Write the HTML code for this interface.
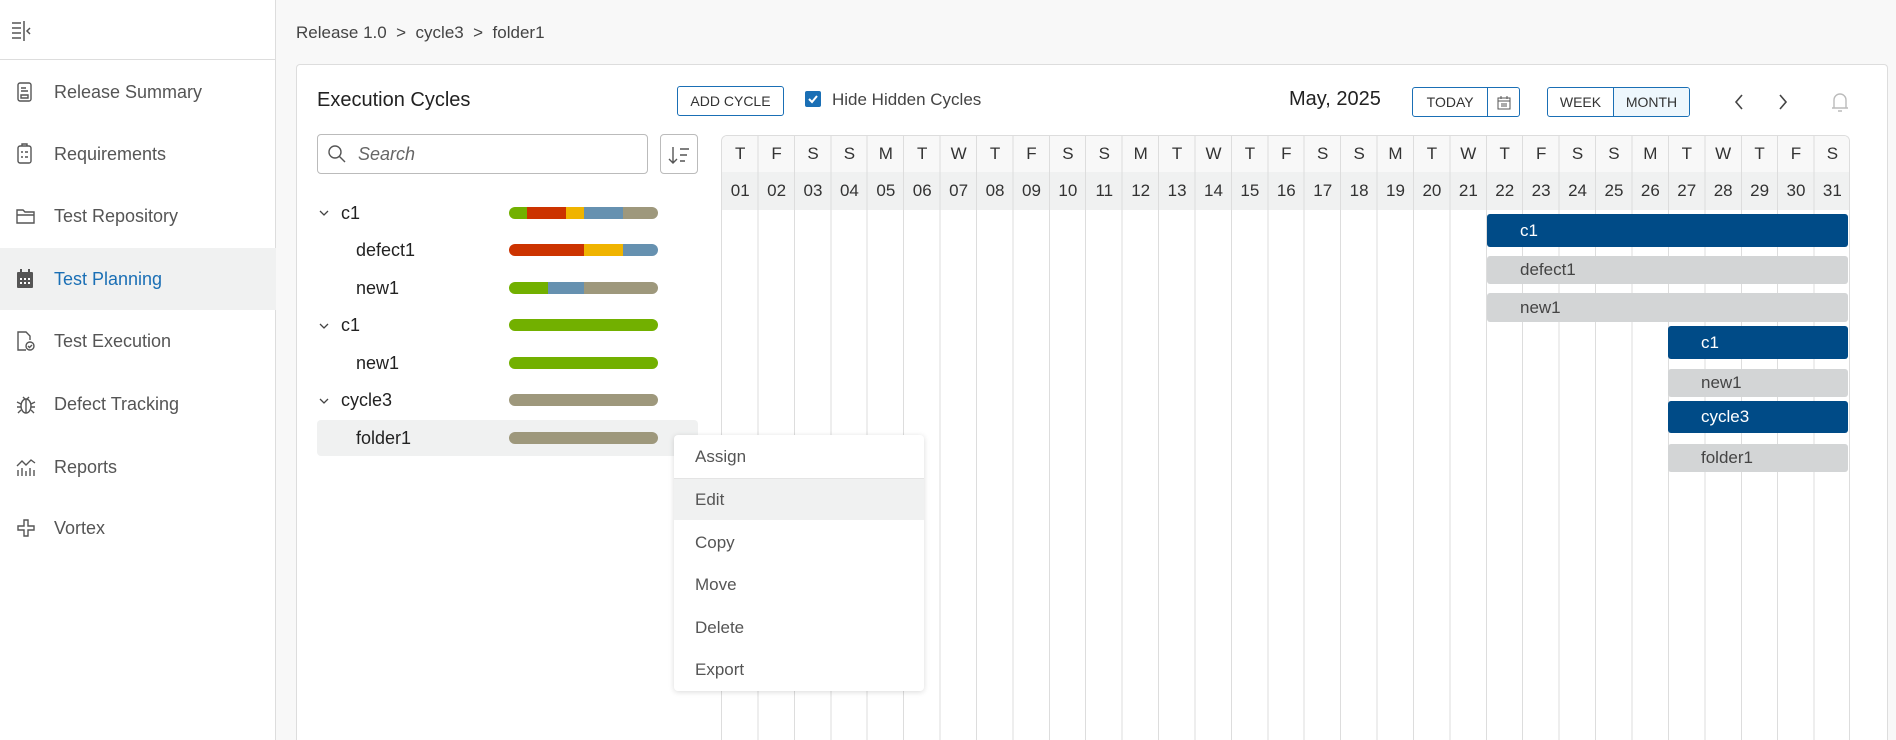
<!DOCTYPE html>
<html><head><meta charset="utf-8"><style>
*{box-sizing:border-box;margin:0;padding:0}
html{width:1896px;height:740px;overflow:hidden}
body{width:1896px;height:740px;overflow:hidden;background:#f8f8f8;font-family:"Liberation Sans",sans-serif;color:#333;position:relative}
.abs{position:absolute}
#side{left:0;top:0;width:276px;height:740px;background:#fff;border-right:1px solid #ddd}
.mi{position:absolute;left:0;width:276px;height:62px;display:flex;align-items:center;font-size:18px;color:#555}
.mi svg{position:absolute;left:15px}
.mi span{position:absolute;left:54px}
#panel{left:296px;top:64px;width:1592px;height:676px;background:#fff;border:1px solid #ddd;border-bottom:none;border-radius:4px 4px 0 0}
.btn{position:absolute;border:1px solid #1a6fb5;border-radius:3px;font-size:14px;color:#333;display:flex;align-items:center;justify-content:center;background:#fff}
.row{position:absolute;font-size:18px;color:#222;height:37px;display:flex;align-items:center}
.bar{position:absolute;left:509px;width:149px;height:12px;border-radius:6px;overflow:hidden;display:flex}
.g{background:#72b000}.r{background:#cc3300}.y{background:#f0b400}.b{background:#6691b0}.t{background:#9e987c}
#gantt{left:721px;top:135px;width:1129px;height:605px;border:1px solid #ddd;border-bottom:none;border-radius:6px 6px 0 0;overflow:hidden;
background:repeating-linear-gradient(90deg,transparent 0,transparent 35.42px,#ddd 35.42px,#ddd 36.42px)}
.hr{position:absolute;left:0;width:1129px;display:flex}
.hr div{width:36.42px;text-align:center;font-size:17px;color:#333}
.gb{position:absolute;border-radius:3px;font-size:17px;display:flex;align-items:center;padding-left:33px}
.dk{background:#004b87;color:#fff}.lt{background:#d3d5d6;color:#444}
#menu{left:674px;top:435px;width:250px;height:256px;background:#fff;border-radius:4px;box-shadow:0 1px 6px rgba(0,0,0,.15)}
.it{position:absolute;left:0;width:250px;height:42px;display:flex;align-items:center;padding-left:21px;font-size:17px;color:#555}
</style></head><body>
<div id="side" class="abs">
 <svg class="abs" style="left:10px;top:20px" width="24" height="22" viewBox="0 0 24 22" fill="none" stroke="#555" stroke-width="1.5"><path d="M2 3h9M2 8h9M2 13h9M2 18h9M14 1v20M20 8l-3 3 3 3"/></svg>
 <div class="abs" style="left:0;top:59px;width:276px;border-top:1px solid #ddd"></div>
 <div class="mi" style="top:61px"><svg width="20" height="22" viewBox="0 0 20 22" fill="none" stroke="#555" stroke-width="1.4"><rect x="3" y="2" width="13" height="18" rx="2"/><path d="M6 7h5M6 10h7M6 14h7v3H6z"/></svg><span>Release Summary</span></div>
 <div class="mi" style="top:123px"><svg width="20" height="22" viewBox="0 0 20 22" fill="none" stroke="#555" stroke-width="1.4"><rect x="3" y="3" width="13" height="17" rx="2"/><path d="M7 3V1h5v2M6 9h2M10 9h3M6 14h2M10 14h3"/></svg><span>Requirements</span></div>
 <div class="mi" style="top:185px"><svg width="22" height="20" viewBox="0 0 22 20" fill="none" stroke="#555" stroke-width="1.4"><path d="M2 4h6l2 2h9v11H2z M2 9h17"/></svg><span>Test Repository</span></div>
 <div class="mi" style="top:248px;background:#f0f1f1;color:#1a6fb5"><svg width="20" height="22" viewBox="0 0 20 22"><rect x="2" y="4" width="16" height="16" rx="1" fill="#555"/><rect x="5" y="1" width="2" height="5" fill="#555"/><rect x="13" y="1" width="2" height="5" fill="#555"/><g fill="#fff"><rect x="5" y="10" width="2" height="2"/><rect x="9" y="10" width="2" height="2"/><rect x="13" y="10" width="2" height="2"/><rect x="5" y="14" width="2" height="2"/><rect x="9" y="14" width="2" height="2"/><rect x="13" y="14" width="2" height="2"/></g></svg><span>Test Planning</span></div>
 <div class="mi" style="top:310px"><svg width="22" height="22" viewBox="0 0 22 22" fill="none" stroke="#555" stroke-width="1.4"><path d="M11 20H3V2h8l4 4v4"/><circle cx="15" cy="16" r="4"/><path d="M13 16l1.5 1.5L17 15"/></svg><span>Test Execution</span></div>
 <div class="mi" style="top:373px"><svg width="22" height="22" viewBox="0 0 22 22" fill="none" stroke="#555" stroke-width="1.4"><ellipse cx="11" cy="13" rx="5" ry="7"/><path d="M11 6v14M2 9l4 2M20 9l-4 2M2 14h4M20 14h-4M3 20l3-3M19 20l-3-3M8 4l2 2M14 4l-2 2"/></svg><span>Defect Tracking</span></div>
 <div class="mi" style="top:436px"><svg width="22" height="22" viewBox="0 0 22 22" fill="none" stroke="#555" stroke-width="1.4"><path d="M2 10l5-5 4 4 5-5 4 3M3 14v6M7 12v8M11 15v5M15 12v8M19 14v6"/></svg><span>Reports</span></div>
 <div class="mi" style="top:497px"><svg width="22" height="22" viewBox="0 0 22 22" fill="none" stroke="#555" stroke-width="1.4"><path d="M9 3h4v6h6v4h-6v6H9v-6H3V9h6z"/></svg><span>Vortex</span></div>
</div>
<div class="abs" style="left:296px;top:23px;font-size:17px;color:#444">Release 1.0 &nbsp;&gt;&nbsp; cycle3 &nbsp;&gt;&nbsp; folder1</div>
<div id="panel" class="abs"></div>
<div class="abs" style="left:317px;top:89px;font-size:20px;color:#222">Execution Cycles</div>
<div class="btn" style="left:677px;top:86px;width:107px;height:30px">ADD CYCLE</div>
<div class="abs" style="left:805px;top:91px;width:16px;height:16px;background:#1a6fb5;border-radius:2px"><svg width="16" height="16" viewBox="0 0 16 16"><path d="M4 8l3 3 5-6" stroke="#fff" stroke-width="2" fill="none"/></svg></div>
<div class="abs" style="left:832px;top:90px;font-size:17px;color:#444">Hide Hidden Cycles</div>
<div class="abs" style="left:1289px;top:88px;font-size:20px;color:#222">May, 2025</div>
<div class="btn" style="left:1412px;top:87px;width:108px;height:30px;justify-content:flex-start"><span style="width:75px;text-align:center">TODAY</span><span style="border-left:1px solid #1a6fb5;height:28px;width:32px;display:flex;align-items:center;justify-content:center"><svg width="14" height="15" viewBox="0 0 14 15"><rect x="1" y="3" width="12" height="11" fill="none" stroke="#555"/><path d="M1 6h12M4 1v3M10 1v3M4 9h6M4 11h6" stroke="#555"/></svg></span></div>
<div class="btn" style="left:1547px;top:87px;width:143px;height:30px;justify-content:flex-start;overflow:hidden"><span style="width:65px;text-align:center">WEEK</span><span style="border-left:1px solid #1a6fb5;height:28px;flex:1;display:flex;align-items:center;justify-content:center;background:#eef7fd">MONTH</span></div>
<svg class="abs" style="left:1732px;top:92px" width="14" height="20"><path d="M10 3L4 10l6 7" stroke="#444" stroke-width="1.6" fill="none"/></svg>
<svg class="abs" style="left:1776px;top:92px" width="14" height="20"><path d="M4 3l6 7-6 7" stroke="#444" stroke-width="1.6" fill="none"/></svg>
<svg class="abs" style="left:1830px;top:90px" width="20" height="24"><path d="M4 18V10a6 6 0 0112 0v8zM2 18h16M8 21h4" stroke="#bbb" stroke-width="1.4" fill="none"/></svg>
<div class="abs" style="left:317px;top:134px;width:331px;height:40px;border:1px solid #bbb;border-radius:4px"></div>
<svg class="abs" style="left:327px;top:144px" width="20" height="20"><circle cx="8" cy="8" r="6" stroke="#555" stroke-width="1.4" fill="none"/><path d="M12.5 12.5L18 18" stroke="#555" stroke-width="1.4"/></svg>
<div class="abs" style="left:358px;top:144px;font-size:18px;color:#666;font-style:italic">Search</div>
<div class="abs" style="left:660px;top:134px;width:38px;height:40px;border:1px solid #bbb;border-radius:4px"><svg width="38" height="40"><path d="M12 12v16M8 24l4 4 4-4M19 14h9M19 20h7M19 26h5" stroke="#555" stroke-width="1.4" fill="none"/></svg></div>
<div class="abs" style="left:317px;top:420px;width:381px;height:36px;background:#f0f1f1;border-radius:4px"></div>
<svg class="abs" style="left:318px;top:207px" width="12" height="12"><path d="M2 4l4 4 4-4" stroke="#444" stroke-width="1.3" fill="none"/></svg>
<svg class="abs" style="left:318px;top:320px" width="12" height="12"><path d="M2 4l4 4 4-4" stroke="#444" stroke-width="1.3" fill="none"/></svg>
<svg class="abs" style="left:318px;top:395px" width="12" height="12"><path d="M2 4l4 4 4-4" stroke="#444" stroke-width="1.3" fill="none"/></svg>
<div class="row" style="left:341px;top:195px">c1</div>
<div class="row" style="left:356px;top:232px">defect1</div>
<div class="row" style="left:356px;top:270px">new1</div>
<div class="row" style="left:341px;top:307px">c1</div>
<div class="row" style="left:356px;top:345px">new1</div>
<div class="row" style="left:341px;top:382px">cycle3</div>
<div class="row" style="left:356px;top:420px">folder1</div>
<div class="bar" style="top:207px"><i class="g" style="width:18px"></i><i class="r" style="width:39px"></i><i class="y" style="width:18px"></i><i class="b" style="width:39px"></i><i class="t" style="flex:1"></i></div>
<div class="bar" style="top:244px"><i class="r" style="width:75px"></i><i class="y" style="width:39px"></i><i class="b" style="flex:1"></i></div>
<div class="bar" style="top:282px"><i class="g" style="width:39px"></i><i class="b" style="width:36px"></i><i class="t" style="flex:1"></i></div>
<div class="bar g" style="top:319px"></div>
<div class="bar g" style="top:357px"></div>
<div class="bar t" style="top:394px"></div>
<div class="bar t" style="top:432px"></div>
<div id="gantt" class="abs">
 <div class="hr" style="top:0;height:36px;background:#f8f8f8;align-items:center"><div>T</div><div>F</div><div>S</div><div>S</div><div>M</div><div>T</div><div>W</div><div>T</div><div>F</div><div>S</div><div>S</div><div>M</div><div>T</div><div>W</div><div>T</div><div>F</div><div>S</div><div>S</div><div>M</div><div>T</div><div>W</div><div>T</div><div>F</div><div>S</div><div>S</div><div>M</div><div>T</div><div>W</div><div>T</div><div>F</div><div>S</div></div>
 <div class="hr" style="top:36px;height:38px;background:#f0f1f1;align-items:center"><div>01</div><div>02</div><div>03</div><div>04</div><div>05</div><div>06</div><div>07</div><div>08</div><div>09</div><div>10</div><div>11</div><div>12</div><div>13</div><div>14</div><div>15</div><div>16</div><div>17</div><div>18</div><div>19</div><div>20</div><div>21</div><div>22</div><div>23</div><div>24</div><div>25</div><div>26</div><div>27</div><div>28</div><div>29</div><div>30</div><div>31</div></div>
 <div class="hr" style="top:0;height:74px;background:repeating-linear-gradient(90deg,transparent 0,transparent 35.42px,#ddd 35.42px,#ddd 36.42px)"></div>
</div>
<div class="gb dk" style="left:1487px;top:214px;width:361px;height:33px">c1</div>
<div class="gb lt" style="left:1487px;top:256px;width:361px;height:28px">defect1</div>
<div class="gb lt" style="left:1487px;top:293px;width:361px;height:29px">new1</div>
<div class="gb dk" style="left:1668px;top:326px;width:180px;height:33px">c1</div>
<div class="gb lt" style="left:1668px;top:369px;width:180px;height:28px">new1</div>
<div class="gb dk" style="left:1668px;top:401px;width:180px;height:32px">cycle3</div>
<div class="gb lt" style="left:1668px;top:444px;width:180px;height:28px">folder1</div>
<div id="menu" class="abs">
 <div class="it" style="top:1px">Assign</div>
 <div class="it" style="top:43px;background:#f0f1f1;border-top:1px solid #e4e4e4">Edit</div>
 <div class="it" style="top:87px">Copy</div>
 <div class="it" style="top:129px">Move</div>
 <div class="it" style="top:172px">Delete</div>
 <div class="it" style="top:214px">Export</div>
</div>
</body></html>
